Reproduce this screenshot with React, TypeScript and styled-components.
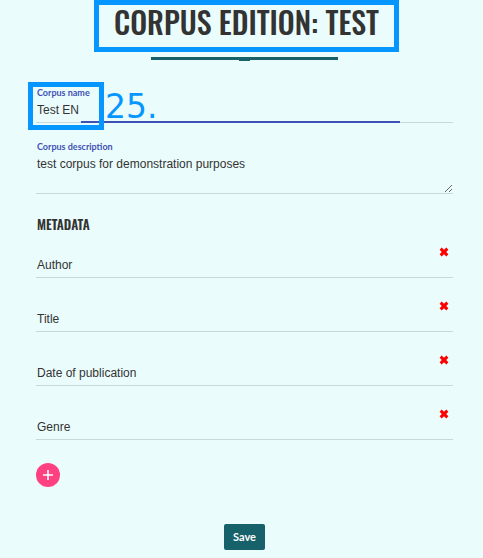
import React, { useState } from "react";
import styled, { createGlobalStyle } from "styled-components";

const color = {
  page: "#ebfcfc",
  ink: "#333333",
  teal: "#17616b",
  line: "#c9d9da",
  indigo: "#3f51b5",
  mark: "#0596ff",
  pink: "#ff4081",
  danger: "#ff0000",
};

const display = `Oswald, "Liberation Sans Narrow", "Liberation Sans", sans-serif`;

const GlobalStyle = createGlobalStyle`
  *, *::before, *::after { box-sizing: border-box; }
  body { margin: 0; background: ${color.page}; color: ${color.ink}; font-family: Lato, sans-serif; }
  input, textarea, button { font: inherit; color: inherit; }
`;

const Page = styled.main`
  padding: 0 30px 8px 36px;
`;

const Header = styled.header`
  display: flex;
  flex-direction: column;
  align-items: center;
`;

const TitleFrame = styled.div`
  display: flex;
  justify-content: center;
  align-items: center;
  height: 52px;
  margin-left: 4px;
  padding: 0 15px 8px;
  border: 5px solid ${color.mark};
`;

const Title = styled.h1`
  margin: 0;
  font: 500 30px/40px ${display};
  white-space: nowrap;
`;

const TitleRule = styled.div`
  width: 187px;
  height: 3px;
  margin-top: 5px;
  background: ${color.teal};

  &::after {
    content: "";
    display: block;
    width: 11px;
    height: 4px;
    margin: 0 auto;
    background: ${color.teal};
  }
`;

const Field = styled.div`
  position: relative;
  display: flex;
  flex-direction: column;
  border-bottom: 1px solid ${color.line};
`;

const NameField = styled(Field)`
  margin-top: 26px;

  &::after {
    content: "";
    position: absolute;
    left: 45px;
    right: 53px;
    bottom: -1px;
    height: 2px;
    background: ${color.indigo};
  }
`;

const DescriptionField = styled(Field)`
  margin-top: 17px;
`;

const Label = styled.label`
  padding-left: 1px;
  color: ${color.indigo};
  font-size: 9px;
  font-weight: 700;
  line-height: 14px;
`;

const TextInput = styled.input`
  width: 100%;
  height: 22px;
  padding: 0 1px 2px;
  border: 0;
  outline: 0;
  background: transparent;
  font: 12px/16px "Liberation Sans", Arial, sans-serif;
`;

const TextArea = styled.textarea`
  width: 100%;
  height: 39px;
  padding: 2px 1px;
  border: 0;
  outline: 0;
  resize: vertical;
  background: transparent;
  font: 12px/16px "Liberation Sans", Arial, sans-serif;
`;

const MarkFrame = styled.div`
  position: absolute;
  z-index: 1;
  left: -8px;
  top: -4px;
  width: 76px;
  height: 48px;
  border: 5px solid ${color.mark};
  pointer-events: none;
`;

const MarkNumber = styled.span`
  position: absolute;
  left: 69px;
  top: 1px;
  color: ${color.mark};
  font: 33px/40px "DejaVu Sans", sans-serif;
  pointer-events: none;
`;

const SectionTitle = styled.h2`
  margin: 20px 0 0 1px;
  font: 600 13px/20px ${display};
`;

const MetadataList = styled.ul`
  margin: 0;
  padding: 0;
  list-style: none;
`;

const MetadataItem = styled.li`
  display: flex;
  flex-direction: column;
  justify-content: flex-end;
  height: 54px;
  border-bottom: 1px solid ${color.line};

  &:first-child { height: 44px; }
`;

const RemoveButton = styled.button`
  display: flex;
  align-self: flex-end;
  margin-right: 4px;
  padding: 0;
  border: 0;
  background: none;
  color: ${color.danger};
  cursor: pointer;
`;

const MetadataInput = styled(TextInput)`
  height: 20px;
  padding-bottom: 4px;
`;

const AddButton = styled.button`
  display: flex;
  align-items: center;
  justify-content: center;
  width: 24px;
  height: 24px;
  margin-top: 23px;
  padding: 0;
  border: 0;
  border-radius: 50%;
  background: ${color.pink};
  color: #fff;
  cursor: pointer;
`;

const Actions = styled.div`
  display: flex;
  justify-content: center;
  margin-top: 37px;
`;

const SaveButton = styled.button`
  height: 26px;
  padding: 0 9px 1px;
  border: 0;
  border-radius: 2px;
  background: ${color.teal};
  color: #fff;
  font-size: 11px;
  font-weight: 700;
  cursor: pointer;
`;

const CrossIcon = () => (
  <svg width="10" height="10" viewBox="0 0 10 10" aria-hidden="true">
    <path
      d="M2.7 0.6 5 2.7 7.3 0.6 9.4 2.7 7.2 5 9.4 7.3 7.3 9.4 5 7.3 2.7 9.4 0.6 7.3 2.8 5 0.6 2.7Z"
      fill="currentColor"
    />
  </svg>
);

const PlusIcon = () => (
  <svg width="12" height="12" viewBox="0 0 12 12" aria-hidden="true">
    <path d="M6 1V11M1 6H11" stroke="currentColor" strokeWidth="1.6" />
  </svg>
);

export default function App() {
  const [fields, setFields] = useState(["Author", "Title", "Date of publication", "Genre"]);

  const rename = (index: number, value: string) =>
    setFields(fields.map((field, i) => (i === index ? value : field)));
  const remove = (index: number) => setFields(fields.filter((_, i) => i !== index));

  return (
    <>
      <GlobalStyle />
      <Page>
        <Header>
          <TitleFrame>
            <Title>CORPUS EDITION: TEST</Title>
          </TitleFrame>
          <TitleRule />
        </Header>
        <form onSubmit={(event) => event.preventDefault()}>
          <NameField>
            <Label htmlFor="corpus-name">Corpus name</Label>
            <TextInput id="corpus-name" defaultValue="Test EN" />
            <MarkFrame />
            <MarkNumber>25.</MarkNumber>
          </NameField>
          <DescriptionField>
            <Label htmlFor="corpus-description">Corpus description</Label>
            <TextArea id="corpus-description" defaultValue="test corpus for demonstration purposes" />
          </DescriptionField>
          <SectionTitle>METADATA</SectionTitle>
          <MetadataList>
            {fields.map((field, index) => (
              <MetadataItem key={index}>
                <RemoveButton type="button" aria-label={`Remove ${field}`} onClick={() => remove(index)}>
                  <CrossIcon />
                </RemoveButton>
                <MetadataInput
                  aria-label={`Metadata field ${index + 1}`}
                  value={field}
                  onChange={(event) => rename(index, event.target.value)}
                />
              </MetadataItem>
            ))}
          </MetadataList>
          <AddButton type="button" aria-label="Add metadata" onClick={() => setFields([...fields, ""])}>
            <PlusIcon />
          </AddButton>
          <Actions>
            <SaveButton type="submit">Save</SaveButton>
          </Actions>
        </form>
      </Page>
    </>
  );
}
